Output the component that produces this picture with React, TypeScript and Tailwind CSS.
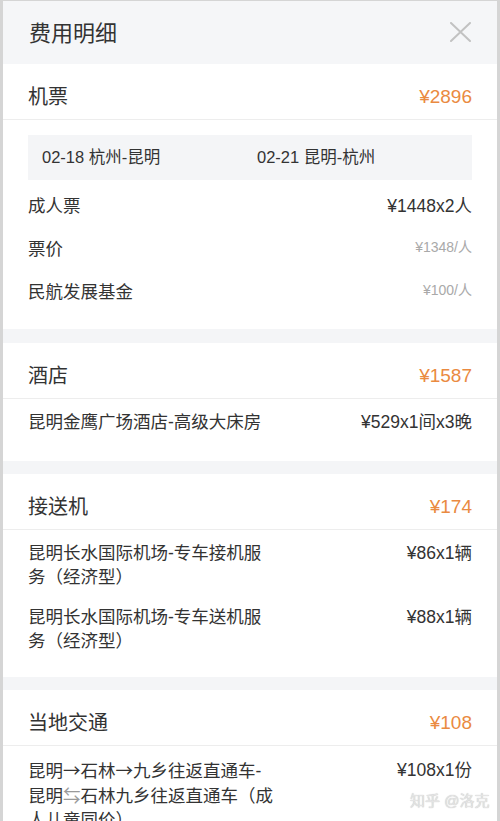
import React from "react";

const font = { fontFamily: '"Liberation Sans", "Noto Sans CJK SC", sans-serif' };
const cjk = { fontFamily: '"Noto Sans CJK SC", sans-serif' };

function SectionHeader({ title, price }: { title: string; price: string }) {
  return (
    <div className="h-[56px] flex items-center justify-between pt-[10px] px-[25px] border-b border-[#ededed]">
      <span className="text-[20px] text-[#333] leading-[28px]">{title}</span>
      <span className="text-[19px] text-[#ea8a41] leading-[28px]">{price}</span>
    </div>
  );
}

function Row({ lines, value }: { lines: React.ReactNode[]; value: string }) {
  return (
    <div className="flex justify-between items-start text-[17.5px] leading-[24px] text-[#333]">
      <div className="flex flex-col">
        {lines.map((l, i) => (
          <span key={i} className="whitespace-nowrap">
            {l}
          </span>
        ))}
      </div>
      <span className="whitespace-nowrap">{value}</span>
    </div>
  );
}

export default function App() {
  return (
    <div
      className="relative w-[500px] h-[821px] overflow-hidden bg-[#f4f5f7] border-x-[3px] border-t border-[#d5d5d5]"
      style={font}
    >
      {/* Header */}
      <div className="h-[63px] flex items-center justify-between pl-[26px] pr-[25px] bg-[#f5f6f8]">
        <span className="text-[22px] text-[#333] leading-[30px] pt-[2px]">费用明细</span>
        <svg width="21" height="20" viewBox="0 0 21 20" className="mr-[1px] mt-[-2px]">
          <path d="M1 1 L20 19 M20 1 L1 19" stroke="#c2c2c2" strokeWidth="2" strokeLinecap="round" />
        </svg>
      </div>

      {/* 机票 */}
      <div className="bg-white">
        <SectionHeader title="机票" price="¥2896" />
        <div className="px-[25px] pt-[15px] pb-[15px]">
          <div className="h-[45px] bg-[#f4f5f7] flex items-center pl-[14px] text-[16.5px] text-[#333]">
            <span className="w-[215px]">02-18 杭州-昆明</span>
            <span>02-21 昆明-杭州</span>
          </div>
          <div className="mt-[5px]">
            <div className="h-[43px] flex items-center justify-between text-[17.5px] text-[#333]">
              <span>成人票</span>
              <span>¥1448x2人</span>
            </div>
            <div className="h-[43px] flex items-center justify-between text-[17.5px] text-[#333]">
              <span>票价</span>
              <span className="text-[14px] text-[#a9a9a9] mb-[4px]">¥1348/人</span>
            </div>
            <div className="h-[43px] flex items-center justify-between text-[17.5px] text-[#333]">
              <span>民航发展基金</span>
              <span className="text-[14px] text-[#a9a9a9] mb-[4px]">¥100/人</span>
            </div>
          </div>
        </div>
      </div>

      {/* 酒店 */}
      <div className="bg-white mt-[14px]">
        <SectionHeader title="酒店" price="¥1587" />
        <div className="px-[25px] pt-[11px] pb-[27px]">
          <Row lines={["昆明金鹰广场酒店-高级大床房"]} value="¥529x1间x3晚" />
        </div>
      </div>

      {/* 接送机 */}
      <div className="bg-white mt-[13px]">
        <SectionHeader title="接送机" price="¥174" />
        <div className="px-[25px] pt-[11px] pb-[24px] flex flex-col gap-[16px]">
          <Row lines={["昆明长水国际机场-专车接机服", "务（经济型）"]} value="¥86x1辆" />
          <Row lines={["昆明长水国际机场-专车送机服", "务（经济型）"]} value="¥88x1辆" />
        </div>
      </div>

      {/* 当地交通 */}
      <div className="bg-white mt-[13px]">
        <SectionHeader title="当地交通" price="¥108" />
        <div className="px-[25px] pt-[12px] pb-[24px]">
          <Row
            lines={[
              <>
                昆明<span style={cjk}>→</span>石林<span style={cjk}>→</span>九乡往返直通车-
              </>,
              <>
                昆明<span className="text-[#9a9a9a]" style={cjk}>⇆</span>石林九乡往返直通车（成
              </>,
              "人儿童同价）",
            ]}
            value="¥108x1份"
          />
        </div>
      </div>

      {/* Watermark */}
      <div
        className="absolute left-[407px] top-[789px] text-[15px] leading-[22px] text-[#e4e4e4] whitespace-nowrap"
        style={{ textShadow: "0 0 1px #b5b5b5" }}
      >
        知乎 @洛克
      </div>
    </div>
  );
}
